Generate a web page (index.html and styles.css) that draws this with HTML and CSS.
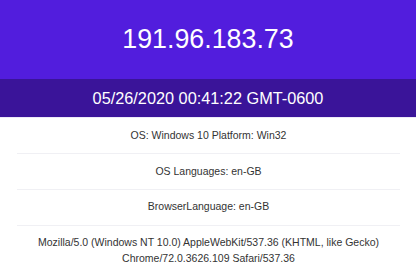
FILE: index.html
```html
<!DOCTYPE html>
<html>
  <head>
    <meta charset="utf-8">
    <meta name="viewport" content="width=device-width, initial-scale=1">
    <title>My IP</title>
    <link rel="stylesheet" href="styles.css">
  </head>
  <body>
    <header class="ip">191.96.183.73</header>
    <div class="time">05/26/2020 00:41:22 GMT-0600</div>
    <ul class="info">
      <li>OS: Windows 10 Platform: Win32</li>
      <li>OS Languages: en-GB</li>
      <li>BrowserLanguage: en-GB</li>
      <li>Mozilla/5.0 (Windows NT 10.0) AppleWebKit/537.36 (KHTML, like Gecko) Chrome/72.0.3626.109 Safari/537.36</li>
    </ul>
  </body>
</html>
```

FILE: styles.css
```css
body {
  font-family: "Liberation Sans", Arial, sans-serif;
  margin: 0;
  color: #333;
}

.ip {
  height: 79px;
  display: flex;
  align-items: center;
  justify-content: center;
  background: #521ddd;
  color: #fff;
  font-size: 26.8px;
}

.time {
  height: 38px;
  display: flex;
  align-items: center;
  justify-content: center;
  background: #3a1499;
  color: #fff;
  font-size: 16.3px;
  border-bottom: 1px solid #ece8f8;
}

.info {
  list-style: none;
  margin: 0 16px 0 17px;
  padding: 0;
  font-size: 10.5px;
  line-height: 15.75px;
  text-align: center;
}

.info li {
  padding: 9.6px 6px;
  border-bottom: 1px solid #f0f0f4;
}

.info li:last-child {
  border-bottom: none;
}
```
